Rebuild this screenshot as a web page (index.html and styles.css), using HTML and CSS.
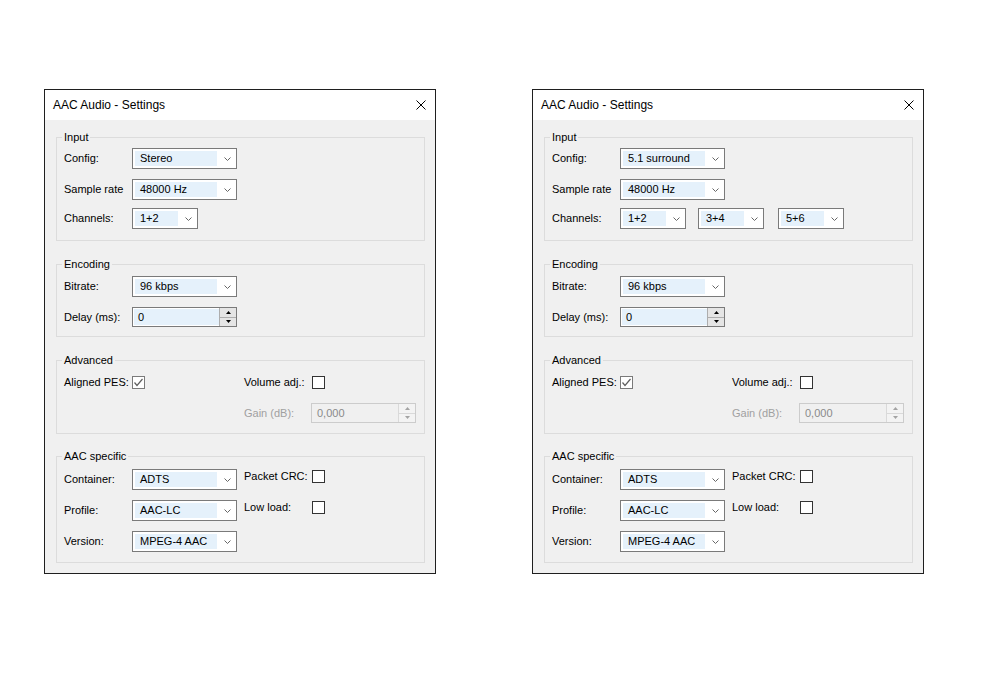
FILE: index.html
```html
<!DOCTYPE html>
<html>
<head>
<meta charset="utf-8">
<title>AAC Audio - Settings</title>
<link rel="stylesheet" href="styles.css">
</head>
<body>
<div class="desk">

  <section class="dialog">
    <header class="titlebar">
      <span class="title">AAC Audio - Settings</span>
      <svg class="close" width="10" height="10" viewBox="0 0 10 10"><path d="M0.5 0.5L9.5 9.5M9.5 0.5L0.5 9.5" stroke="#000" stroke-width="1" fill="none"/></svg>
    </header>
    <div class="body">
      <fieldset class="group g-input">
        <legend>Input</legend>
        <div class="rows">
          <div class="row"><span class="lbl">Config:</span><div class="combo"><span class="val">Stereo</span><span class="arr"><svg width="7" height="4" viewBox="0 0 7 4"><polyline points="0.5,0.5 3.5,3.5 6.5,0.5" fill="none" stroke="#666" stroke-width="1"/></svg></span></div></div>
          <div class="row"><span class="lbl">Sample rate</span><div class="combo"><span class="val">48000 Hz</span><span class="arr"><svg width="7" height="4" viewBox="0 0 7 4"><polyline points="0.5,0.5 3.5,3.5 6.5,0.5" fill="none" stroke="#666" stroke-width="1"/></svg></span></div></div>
          <div class="row tight"><span class="lbl">Channels:</span><div class="combo small"><span class="val">1+2</span><span class="arr"><svg width="7" height="4" viewBox="0 0 7 4"><polyline points="0.5,0.5 3.5,3.5 6.5,0.5" fill="none" stroke="#666" stroke-width="1"/></svg></span></div></div>
        </div>
      </fieldset>

      <fieldset class="group g-enc">
        <legend>Encoding</legend>
        <div class="rows">
          <div class="row"><span class="lbl">Bitrate:</span><div class="combo"><span class="val">96 kbps</span><span class="arr"><svg width="7" height="4" viewBox="0 0 7 4"><polyline points="0.5,0.5 3.5,3.5 6.5,0.5" fill="none" stroke="#666" stroke-width="1"/></svg></span></div></div>
          <div class="row spinrow"><span class="lbl">Delay (ms):</span><div class="spin"><span class="sval">0</span><span class="btns"><span class="btn"><svg width="5" height="3" viewBox="0 0 5 3"><polygon points="2.5,0 5,3 0,3" fill="#000"/></svg></span><span class="btn"><svg width="5" height="3" viewBox="0 0 5 3"><polygon points="0,0 5,0 2.5,3" fill="#000"/></svg></span></span></div></div>
        </div>
      </fieldset>

      <fieldset class="group g-adv">
        <legend>Advanced</legend>
        <div class="grid adv">
          <span class="lbl">Aligned PES:</span>
          <span class="cb checked"><svg width="11" height="11" viewBox="0 0 11 11"><polyline points="1.5,5.5 4,8.5 9.5,2" fill="none" stroke="#5f5f5f" stroke-width="1.2"/></svg></span>
          <span class="lbl">Volume adj.:</span>
          <span class="cb"></span>
          <span class="lbl dis c3">Gain (dB):</span>
          <div class="spin dis c4"><span class="sval">0,000</span><span class="btns"><span class="btn"><svg width="5" height="3" viewBox="0 0 5 3"><polygon points="2.5,0 5,3 0,3" fill="#a3a3a3"/></svg></span><span class="btn"><svg width="5" height="3" viewBox="0 0 5 3"><polygon points="0,0 5,0 2.5,3" fill="#a3a3a3"/></svg></span></span></div>
        </div>
      </fieldset>

      <fieldset class="group g-aac">
        <legend>AAC specific</legend>
        <div class="grid aac">
          <span class="lbl">Container:</span>
          <div class="combo"><span class="val">ADTS</span><span class="arr"><svg width="7" height="4" viewBox="0 0 7 4"><polyline points="0.5,0.5 3.5,3.5 6.5,0.5" fill="none" stroke="#666" stroke-width="1"/></svg></span></div>
          <span class="lbl top">Packet CRC:</span>
          <span class="cb top"></span>
          <span class="lbl">Profile:</span>
          <div class="combo"><span class="val">AAC-LC</span><span class="arr"><svg width="7" height="4" viewBox="0 0 7 4"><polyline points="0.5,0.5 3.5,3.5 6.5,0.5" fill="none" stroke="#666" stroke-width="1"/></svg></span></div>
          <span class="lbl top">Low load:</span>
          <span class="cb top"></span>
          <span class="lbl">Version:</span>
          <div class="combo"><span class="val">MPEG-4 AAC</span><span class="arr"><svg width="7" height="4" viewBox="0 0 7 4"><polyline points="0.5,0.5 3.5,3.5 6.5,0.5" fill="none" stroke="#666" stroke-width="1"/></svg></span></div>
        </div>
      </fieldset>
    </div>
  </section>

  <section class="dialog">
    <header class="titlebar">
      <span class="title">AAC Audio - Settings</span>
      <svg class="close" width="10" height="10" viewBox="0 0 10 10"><path d="M0.5 0.5L9.5 9.5M9.5 0.5L0.5 9.5" stroke="#000" stroke-width="1" fill="none"/></svg>
    </header>
    <div class="body">
      <fieldset class="group g-input">
        <legend>Input</legend>
        <div class="rows">
          <div class="row"><span class="lbl">Config:</span><div class="combo"><span class="val">5.1 surround</span><span class="arr"><svg width="7" height="4" viewBox="0 0 7 4"><polyline points="0.5,0.5 3.5,3.5 6.5,0.5" fill="none" stroke="#666" stroke-width="1"/></svg></span></div></div>
          <div class="row"><span class="lbl">Sample rate</span><div class="combo"><span class="val">48000 Hz</span><span class="arr"><svg width="7" height="4" viewBox="0 0 7 4"><polyline points="0.5,0.5 3.5,3.5 6.5,0.5" fill="none" stroke="#666" stroke-width="1"/></svg></span></div></div>
          <div class="row tight"><span class="lbl">Channels:</span>
            <div class="combo small"><span class="val">1+2</span><span class="arr"><svg width="7" height="4" viewBox="0 0 7 4"><polyline points="0.5,0.5 3.5,3.5 6.5,0.5" fill="none" stroke="#666" stroke-width="1"/></svg></span></div>
            <div class="combo small ch2"><span class="val">3+4</span><span class="arr"><svg width="7" height="4" viewBox="0 0 7 4"><polyline points="0.5,0.5 3.5,3.5 6.5,0.5" fill="none" stroke="#666" stroke-width="1"/></svg></span></div>
            <div class="combo small ch3"><span class="val">5+6</span><span class="arr"><svg width="7" height="4" viewBox="0 0 7 4"><polyline points="0.5,0.5 3.5,3.5 6.5,0.5" fill="none" stroke="#666" stroke-width="1"/></svg></span></div>
          </div>
        </div>
      </fieldset>

      <fieldset class="group g-enc">
        <legend>Encoding</legend>
        <div class="rows">
          <div class="row"><span class="lbl">Bitrate:</span><div class="combo"><span class="val">96 kbps</span><span class="arr"><svg width="7" height="4" viewBox="0 0 7 4"><polyline points="0.5,0.5 3.5,3.5 6.5,0.5" fill="none" stroke="#666" stroke-width="1"/></svg></span></div></div>
          <div class="row spinrow"><span class="lbl">Delay (ms):</span><div class="spin"><span class="sval">0</span><span class="btns"><span class="btn"><svg width="5" height="3" viewBox="0 0 5 3"><polygon points="2.5,0 5,3 0,3" fill="#000"/></svg></span><span class="btn"><svg width="5" height="3" viewBox="0 0 5 3"><polygon points="0,0 5,0 2.5,3" fill="#000"/></svg></span></span></div></div>
        </div>
      </fieldset>

      <fieldset class="group g-adv">
        <legend>Advanced</legend>
        <div class="grid adv">
          <span class="lbl">Aligned PES:</span>
          <span class="cb checked"><svg width="11" height="11" viewBox="0 0 11 11"><polyline points="1.5,5.5 4,8.5 9.5,2" fill="none" stroke="#5f5f5f" stroke-width="1.2"/></svg></span>
          <span class="lbl">Volume adj.:</span>
          <span class="cb"></span>
          <span class="lbl dis c3">Gain (dB):</span>
          <div class="spin dis c4"><span class="sval">0,000</span><span class="btns"><span class="btn"><svg width="5" height="3" viewBox="0 0 5 3"><polygon points="2.5,0 5,3 0,3" fill="#a3a3a3"/></svg></span><span class="btn"><svg width="5" height="3" viewBox="0 0 5 3"><polygon points="0,0 5,0 2.5,3" fill="#a3a3a3"/></svg></span></span></div>
        </div>
      </fieldset>

      <fieldset class="group g-aac">
        <legend>AAC specific</legend>
        <div class="grid aac">
          <span class="lbl">Container:</span>
          <div class="combo"><span class="val">ADTS</span><span class="arr"><svg width="7" height="4" viewBox="0 0 7 4"><polyline points="0.5,0.5 3.5,3.5 6.5,0.5" fill="none" stroke="#666" stroke-width="1"/></svg></span></div>
          <span class="lbl top">Packet CRC:</span>
          <span class="cb top"></span>
          <span class="lbl">Profile:</span>
          <div class="combo"><span class="val">AAC-LC</span><span class="arr"><svg width="7" height="4" viewBox="0 0 7 4"><polyline points="0.5,0.5 3.5,3.5 6.5,0.5" fill="none" stroke="#666" stroke-width="1"/></svg></span></div>
          <span class="lbl top">Low load:</span>
          <span class="cb top"></span>
          <span class="lbl">Version:</span>
          <div class="combo"><span class="val">MPEG-4 AAC</span><span class="arr"><svg width="7" height="4" viewBox="0 0 7 4"><polyline points="0.5,0.5 3.5,3.5 6.5,0.5" fill="none" stroke="#666" stroke-width="1"/></svg></span></div>
        </div>
      </fieldset>
    </div>
  </section>

</div>
</body>
</html>
```

FILE: styles.css
```css
* { box-sizing: border-box; }

html, body {
  margin: 0;
  padding: 0;
  background: #ffffff;
}

body {
  font-family: "Liberation Sans", Arial, sans-serif;
  font-size: 11px;
  color: #000;
}

.desk {
  display: flex;
  align-items: flex-start;
  gap: 96px;
  padding: 89px 0 0 44px;
}

.dialog {
  width: 392px;
  border: 1px solid #1f1f1f;
  background: #f0f0f0;
}

.titlebar {
  display: flex;
  align-items: center;
  justify-content: space-between;
  height: 30px;
  padding: 0 9px 0 8px;
  background: #ffffff;
}

.title {
  font-size: 12px;
  line-height: 30px;
  color: #000;
}

.close {
  display: block;
}

.body {
  padding: 11px 10px 10px 11px;
}

.group {
  margin: 17px 0 0 0;
  padding: 0 7px 0 7px;
  border: 1px solid #dcdcdc;
  min-inline-size: 0;
}

.group:first-child { margin-top: 0; }
.group.g-aac { margin-top: 16px; }

.group legend {
  padding: 0 2px;
  margin-left: -2px;
  line-height: 13px;
  font-size: 11px;
}

.g-input { padding-top: 4px; padding-bottom: 11px; }
.g-enc { padding-top: 5px; padding-bottom: 9px; }
.g-adv { padding-top: 9px; padding-bottom: 10px; }
.g-aac { padding-top: 6px; padding-bottom: 10px; }

.rows {
  display: flex;
  flex-direction: column;
  gap: 10px;
}

.row {
  display: flex;
  align-items: center;
  height: 21px;
}

.row.tight { margin-top: -2px; }
.row.spinrow { height: 20px; }

.lbl {
  width: 68px;
  flex: none;
  line-height: 13px;
  white-space: nowrap;
}

.lbl.dis { color: #a0a0a0; }

/* combo box */
.combo {
  display: flex;
  width: 105px;
  height: 21px;
  padding: 2px;
  border: 1px solid #7a7a7a;
  background: #ffffff;
  flex: none;
}

.combo.small { width: 66px; }
.combo.ch2 { margin-left: 12px; }
.combo.ch3 { margin-left: 14px; }

.combo .val {
  flex: 1;
  background: #e5f1fb;
  padding-left: 5px;
  line-height: 15px;
  white-space: nowrap;
  overflow: hidden;
}

.combo .arr {
  width: 17px;
  flex: none;
  display: flex;
  align-items: center;
  justify-content: center;
  padding-left: 4px;
}

.combo .arr svg { display: block; }

/* spin box */
.spin {
  display: flex;
  width: 105px;
  height: 20px;
  border: 1px solid #7a7a7a;
  background: #ffffff;
  flex: none;
}

.spin .sval {
  flex: 1;
  margin: 1px 0 1px 1px;
  padding-left: 4px;
  line-height: 16px;
  background: #e5f1fb;
}

.spin .btns {
  width: 17px;
  display: flex;
  flex-direction: column;
  border-left: 1px solid #adadad;
}

.spin .btn {
  flex: 1;
  display: flex;
  align-items: center;
  justify-content: center;
  background: #e5e5e5;
}

.spin .btn + .btn { border-top: 1px solid #adadad; }
.spin .btn svg { display: block; }

.spin.dis {
  border-color: #cccccc;
  background: #f0f0f0;
  margin-left: -1px;
}

.spin.dis .sval {
  background: #f0f0f0;
  color: #8a8a8a;
  padding-left: 4px;
}

.spin.dis .btns { border-left-color: #d9d9d9; }
.spin.dis .btn { background: #f3f3f3; }
.spin.dis .btn + .btn { border-top-color: #d9d9d9; }

/* checkbox */
.cb {
  display: flex;
  align-items: center;
  justify-content: center;
  width: 13px;
  height: 13px;
  border: 1px solid #333333;
  background: #ffffff;
}

.cb.checked { border-color: #7a7a7a; }
.cb svg { display: block; }

/* grids for two-column groups */
.grid {
  display: grid;
  grid-template-columns: 68px 112px 68px 1fr;
  align-items: center;
  justify-items: start;
}

.grid.adv {
  grid-template-rows: 13px 20px;
  row-gap: 14px;
}

.grid.aac {
  grid-template-rows: 21px 21px 21px;
  row-gap: 10px;
}

.grid .c3 { grid-column: 3; }
.grid .c4 { grid-column: 4; }

.grid .top { align-self: start; }
.grid .lbl.top { margin-top: 1px; }
.grid .cb.top { margin-top: 1px; }
```
